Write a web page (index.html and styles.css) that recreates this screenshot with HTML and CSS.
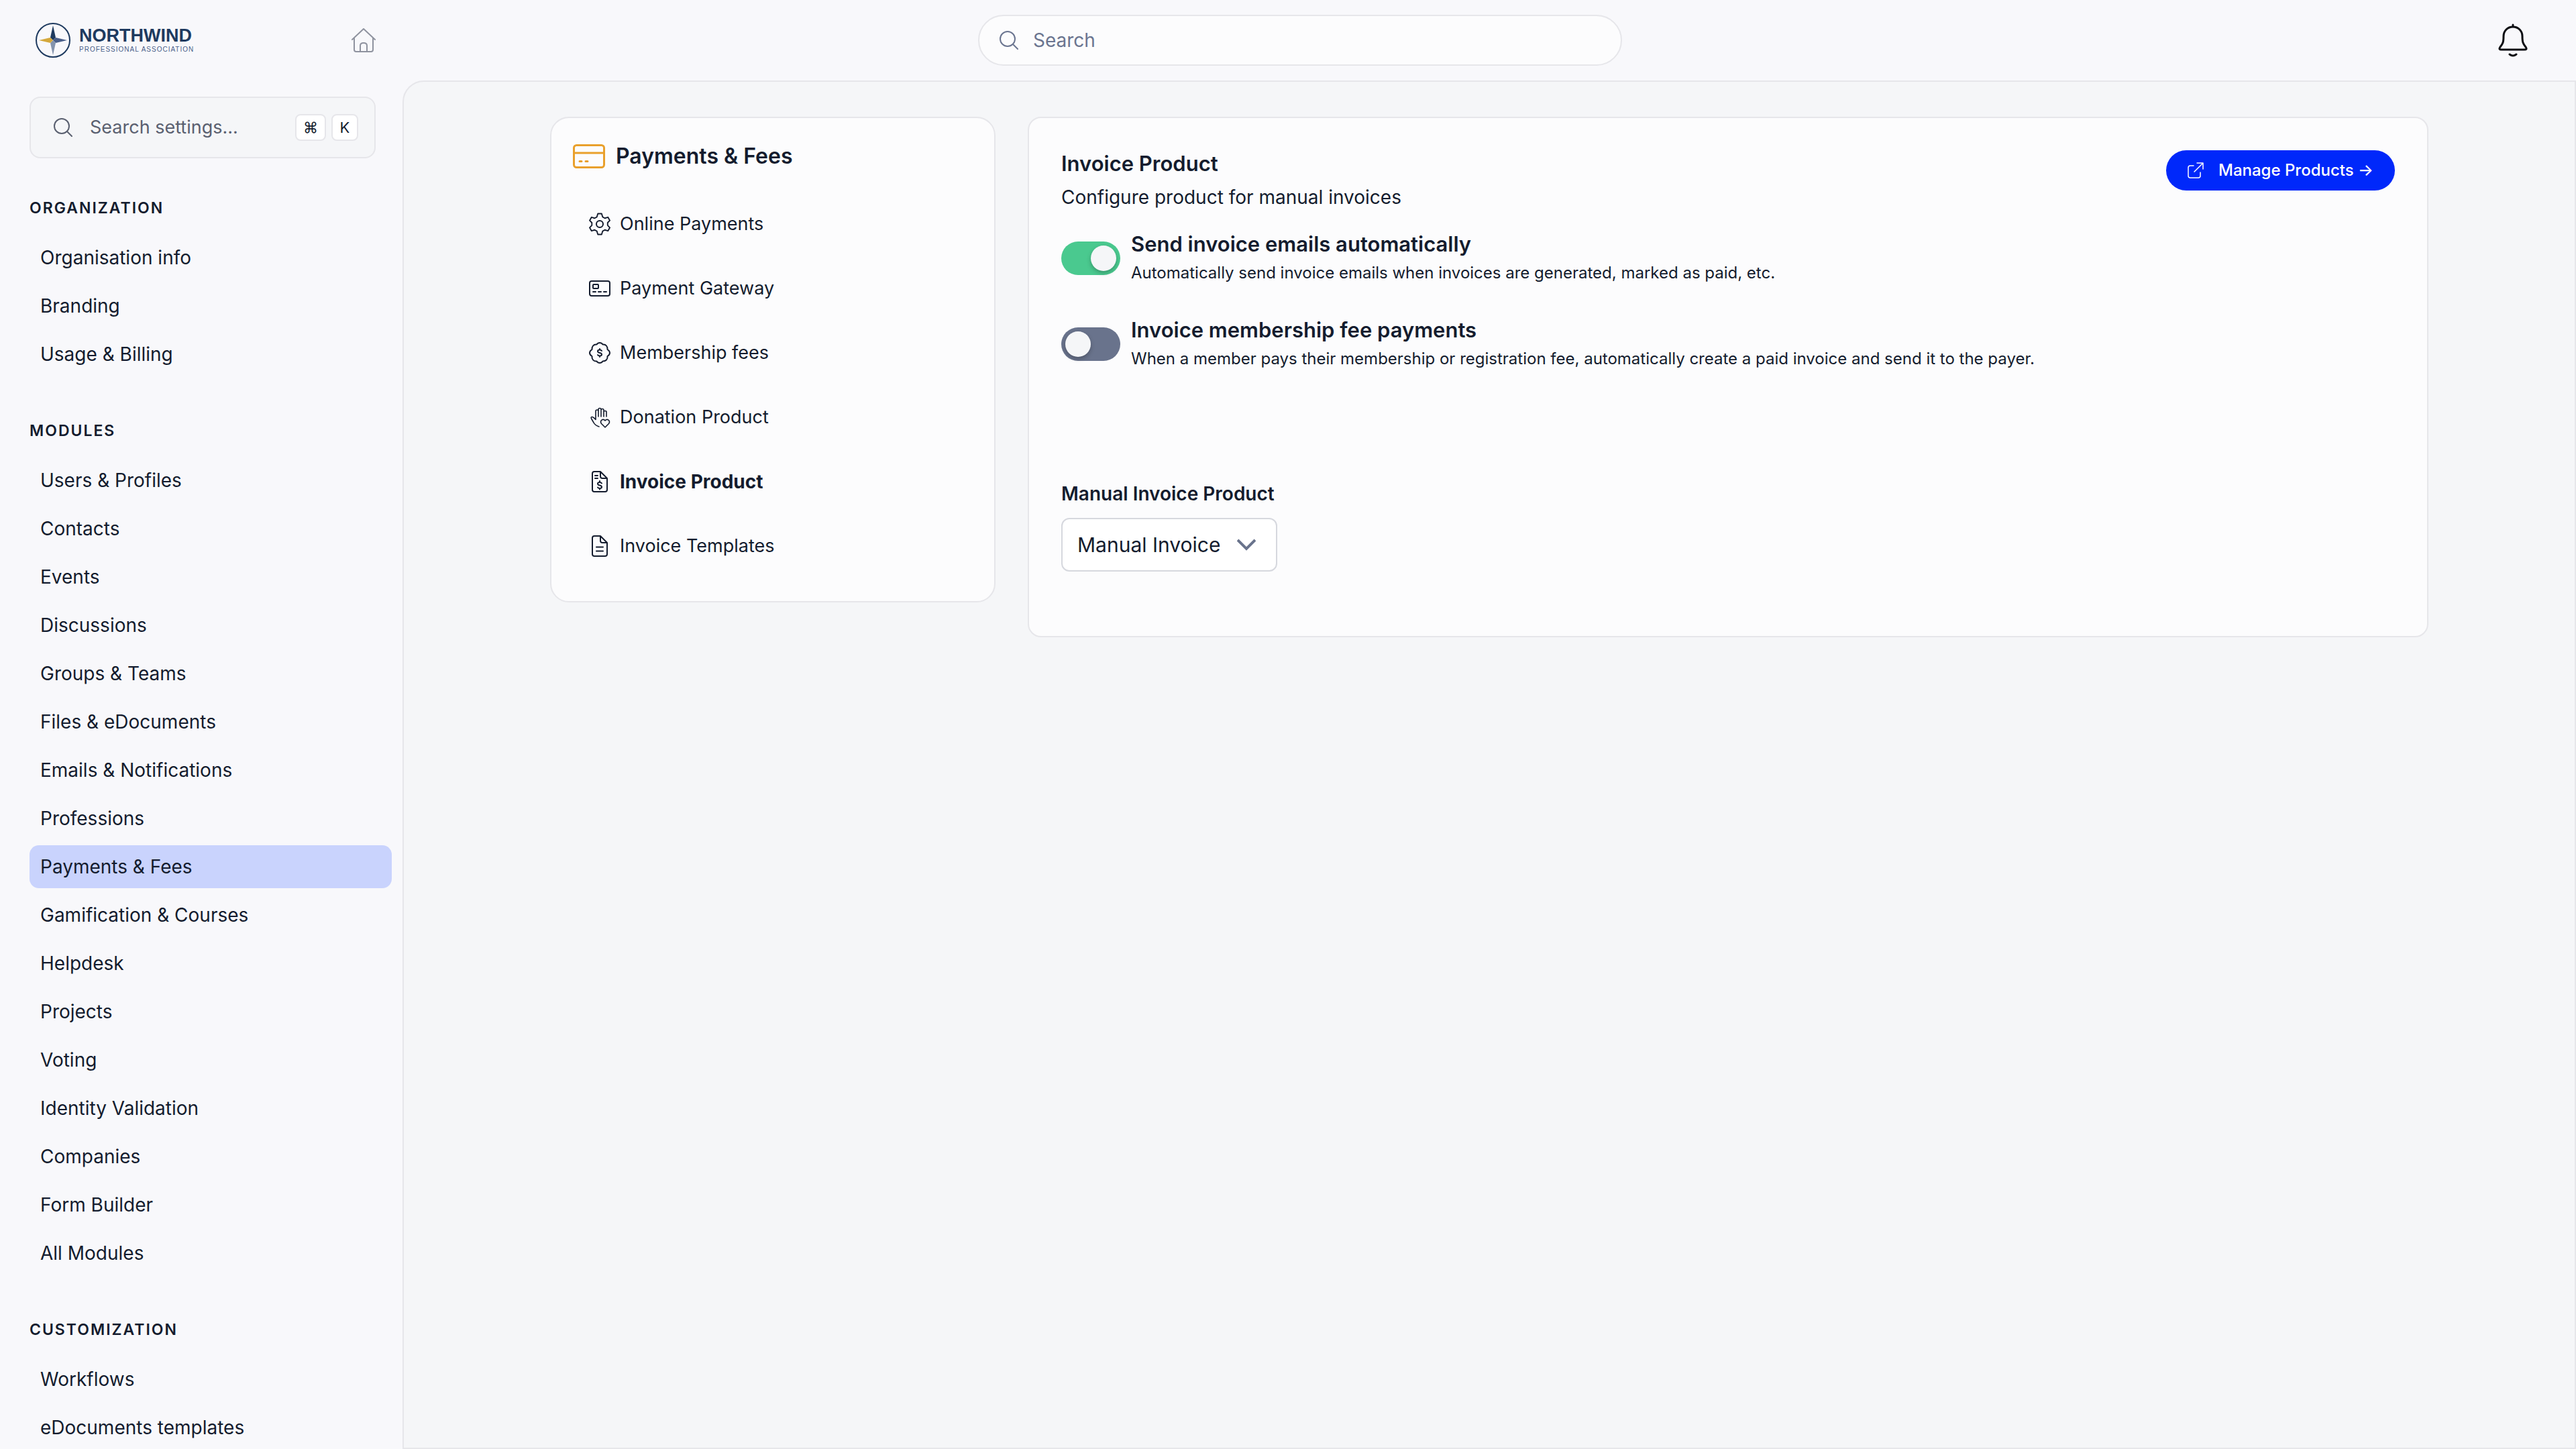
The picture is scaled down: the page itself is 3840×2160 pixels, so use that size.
FILE: index.html
```html
<!DOCTYPE html>
<html lang="en">

<head>
    <meta charset="utf-8">
    <meta name="viewport" content="width=device-width, initial-scale=1.0">
    <title>Invoice Product</title>
    <link rel="stylesheet" href="styles.css">
</head>

<body>
    <header class="topbar">
        <div class="brand">
            <a href="#" class="logo">
                <svg class="logo-mark" viewBox="0 0 54 54" fill="none">
                    <circle cx="27" cy="27" r="25" stroke="#1e3a5f" stroke-width="2" />
                    <path d="M27 5l4 18-4 4-4-4z" fill="#1e3a5f" />
                    <path d="M48 27l-17 4-4-4 4-4z" fill="#4a5f8a" />
                    <path d="M27 49l-4-18 4-4 4 4z" fill="#8494ad" />
                    <path d="M6 27l17-4 4 4-4 4z" fill="#d4a83c" />
                </svg>
                <span class="logo-text">
                    <span class="logo-name">NORTHWIND</span>
                    <span class="logo-sub">PROFESSIONAL ASSOCIATION</span>
                </span>
            </a>
            <a href="#" class="home" aria-label="Home">
                <svg viewBox="0 0 36 36" fill="none" stroke="currentColor" stroke-width="2" stroke-linecap="round" stroke-linejoin="round">
                    <path d="M1 17L18 1l17 16M4 15v17q0 3 3 3h22q3 0 3-3V15" />
                    <path d="M13 35V26q0-4 5-4t5 4v9" />
                </svg>
            </a>
        </div>
        <label class="search">
            <svg class="search-icon" viewBox="0 0 28 28" fill="none" stroke="currentColor" stroke-width="2" stroke-linecap="round">
                <circle cx="12" cy="12" r="11" />
                <path d="M20 20l7 7" />
            </svg>
            <input type="text" placeholder="Search" aria-label="Search">
        </label>
        <button class="bell" aria-label="Notifications">
            <svg viewBox="0 0 44 50" fill="none" stroke="currentColor" stroke-width="3" stroke-linecap="round" stroke-linejoin="round">
                <path d="M22 2v3M22 5c8 0 14 6 14 14 0 9 1 11 5 16 2 3 1 4-2 4H5c-3 0-4-1-2-4 4-5 5-7 5-16C8 11 14 5 22 5z" />
                <path d="M17 46q5 4 10 0" />
            </svg>
        </button>
    </header>

    <div class="layout">
        <aside class="sidebar">
            <button class="settings-search">
                <svg class="search-icon" viewBox="0 0 28 28" fill="none" stroke="currentColor" stroke-width="2" stroke-linecap="round">
                    <circle cx="12" cy="12" r="11" />
                    <path d="M20 20l7 7" />
                </svg>
                <span class="settings-label">Search settings...</span>
                <kbd>⌘</kbd>
                <kbd>K</kbd>
            </button>

            <nav class="group">
                <h2>ORGANIZATION</h2>
                <a href="#">Organisation info</a>
                <a href="#">Branding</a>
                <a href="#">Usage &amp; Billing</a>
            </nav>
            <nav class="group">
                <h2>MODULES</h2>
                <a href="#">Users &amp; Profiles</a>
                <a href="#">Contacts</a>
                <a href="#">Events</a>
                <a href="#">Discussions</a>
                <a href="#">Groups &amp; Teams</a>
                <a href="#">Files &amp; eDocuments</a>
                <a href="#">Emails &amp; Notifications</a>
                <a href="#">Professions</a>
                <a href="#" class="active">Payments &amp; Fees</a>
                <a href="#">Gamification &amp; Courses</a>
                <a href="#">Helpdesk</a>
                <a href="#">Projects</a>
                <a href="#">Voting</a>
                <a href="#">Identity Validation</a>
                <a href="#">Companies</a>
                <a href="#">Form Builder</a>
                <a href="#">All Modules</a>
            </nav>
            <nav class="group">
                <h2>CUSTOMIZATION</h2>
                <a href="#">Workflows</a>
                <a href="#">eDocuments templates</a>
            </nav>
        </aside>

        <main class="content">
            <div class="columns">
                <nav class="card submenu">
                    <h1>
                        <svg viewBox="0 0 48 36" fill="none" stroke="currentColor" stroke-width="3" stroke-linecap="round" stroke-linejoin="round">
                            <rect x="1.5" y="1.5" width="45" height="33" rx="4" />
                            <path d="M2 13h44M10 25.500h3M19 25.500h3" />
                        </svg>
                        Payments &amp; Fees
                    </h1>
                    <a href="#">
                        <svg viewBox="0 0 32 34" fill="none" stroke="currentColor" stroke-width="2" stroke-linejoin="round">
                            <path d="M13 1h6l1.500 5 3.500 2 5-1.500 3 5-3.500 3.500v4l3.500 3.500-3 5-5-1.500-3.500 2L19 33h-6l-1.500-5L8 26l-5 1.500-3-5L3.500 19v-4L0 11.500l3-5L8 8l3.500-2z" transform="translate(1 .5) scale(.94 .97)" />
                            <circle cx="16" cy="17" r="5" />
                        </svg>
                        Online Payments
                    </a>
                    <a href="#">
                        <svg viewBox="0 0 32 34" fill="none" stroke="currentColor" stroke-width="2" stroke-linecap="round" stroke-linejoin="round">
                            <rect x="1" y="6" width="30" height="22" rx="3" />
                            <rect x="6" y="11" width="8" height="6" rx="1" />
                            <path d="M6 22h4M14 22h4M22 22h4" />
                        </svg>
                        Payment Gateway
                    </a>
                    <a href="#">
                        <svg viewBox="0 0 32 34" fill="none" stroke="currentColor" stroke-width="2" stroke-linecap="round" stroke-linejoin="round">
                            <path d="M16 2q3 0 4.500 2.500Q24 4 26 6.500T27.500 12Q31 14 31 17t-3.500 5q.5 3.500-1.500 5.500t-5.500 2Q19 32 16 32t-4.500-2.500q-3.500.5-5.500-2T4.500 22Q1 20 1 17t3.500-5Q4 9 6 6.500t5.500-2Q13 2 16 2z" />
                            <path d="M19 14q-1-1.500-3-1.500-3 0-3 2t3 2.500q3 .5 3 2.500t-3 2q-2 0-3-1.500M16 11v1.500M16 21.500V23" />
                        </svg>
                        Membership fees
                    </a>
                    <a href="#">
                        <svg viewBox="0 0 32 34" fill="none" stroke="currentColor" stroke-width="1.6" stroke-linecap="round" stroke-linejoin="round">
                            <path d="M15 31Q9 29 7 25L3.500 19q-1-3 1.500-2.500 2 .5 5 4V8q0-2 2-2t2 2v8M14 8V5.500q0-2 2-2t2 2V16M18 6q0-1.500 2-1.500T22 6.500V16M22 9q0-1.500 2-1.500T26 9v7" />
                            <path d="M24 32l-5.500-5.500q-2-2.500 0-5 3-2.500 5.500.5 2.500-3 5.500-.5 2 2.500 0 5z" />
                        </svg>
                        Donation Product
                    </a>
                    <a href="#" class="current">
                        <svg viewBox="0 0 32 34" fill="none" stroke="currentColor" stroke-width="2" stroke-linecap="round" stroke-linejoin="round">
                            <path d="M8 2h9l10 10v17q0 3-3 3H8q-3 0-3-3V5q0-3 3-3zM17 2v7q0 3 3 3h7M9 8h4M9 12h4" />
                            <path d="M19 19.500q-1-1.500-3-1.500-3 0-3 2t3 2.500q3 .5 3 2.500t-3 2q-2 0-3-1.500M16 16v2M16 27v1.500" />
                        </svg>
                        Invoice Product
                    </a>
                    <a href="#">
                        <svg viewBox="0 0 32 34" fill="none" stroke="currentColor" stroke-width="2" stroke-linecap="round" stroke-linejoin="round">
                            <path d="M8 2h9l10 10v17q0 3-3 3H8q-3 0-3-3V5q0-3 3-3zM17 2v7q0 3 3 3h7M11 18.500h10M11 24.500h10" />
                        </svg>
                        Invoice Templates
                    </a>
                </nav>

                <section class="card panel">
                    <div class="panel-head">
                        <div>
                            <h2>Invoice Product</h2>
                            <p>Configure product for manual invoices</p>
                        </div>
                        <button class="manage">
                            <svg viewBox="0 0 24 24" fill="none" stroke="currentColor" stroke-width="1.5" stroke-linecap="round" stroke-linejoin="round">
                                <path d="M9 5H4Q1 5 1 8v12q0 3 3 3h12q3 0 3-3v-5M14 1h9v9M23 1L10 14" />
                            </svg>
                            Manage Products →
                        </button>
                    </div>

                    <div class="option">
                        <input type="checkbox" id="auto-send" checked>
                        <label for="auto-send">
                            <strong>Send invoice emails automatically</strong>
                            <span>Automatically send invoice emails when invoices are generated, marked as paid, etc.</span>
                        </label>
                    </div>
                    <div class="option">
                        <input type="checkbox" id="fee-invoice">
                        <label for="fee-invoice">
                            <strong>Invoice membership fee payments</strong>
                            <span>When a member pays their membership or registration fee, automatically create a paid invoice and send it to the payer.</span>
                        </label>
                    </div>

                    <div class="field">
                        <label for="product">Manual Invoice Product</label>
                        <div class="select">
                            <select id="product">
                                <option>Manual Invoice</option>
                            </select>
                            <svg viewBox="0 0 28 18" fill="none" stroke="currentColor" stroke-width="4">
                                <path d="M1 2l13 13L27 2" />
                            </svg>
                        </div>
                    </div>
                </section>
            </div>
        </main>
    </div>
</body>

</html>
```
FILE: styles.css
```css
*,
body * {
    box-sizing: border-box;
}

body {
    margin: 0;
    height: 100vh;
    display: flex;
    flex-direction: column;
    overflow: hidden;
    background-color: #f8f8fb;
    color: #141c2e;
    font-family: Inter, sans-serif;
    font-size: 28px;
    line-height: 40px;
}

h1,
h2,
p {
    margin: 0;
}

a {
    color: inherit;
    text-decoration: none;
}

button,
input,
select {
    font: inherit;
    color: inherit;
}

svg {
    display: block;
    flex: none;
}

/* top bar */

.topbar {
    display: grid;
    grid-template-columns: 1fr 960px 1fr;
    align-items: center;
    height: 120px;
    padding: 0 8px 0 44px;
    flex: none;
}

.brand {
    display: flex;
    align-items: center;
    justify-content: space-between;
    width: 516px;
    padding-left: 8px;
}

.logo {
    display: flex;
    align-items: center;
    gap: 12px;
    color: #1e3a5f;
}

.logo-mark {
    width: 54px;
    height: 54px;
}

.logo-text {
    display: flex;
    flex-direction: column;
}

.logo-name {
    font-family: "Liberation Sans", sans-serif;
    font-size: 27px;
    font-weight: 700;
    line-height: 28px;
}

.logo-sub {
    font-family: "Liberation Sans", sans-serif;
    font-size: 10px;
    line-height: 14px;
    letter-spacing: 1px;
    color: #4a5f8a;
}

.home {
    color: #8f939f;
}

.home svg {
    width: 36px;
    height: 36px;
}

.search {
    display: flex;
    align-items: center;
    gap: 22px;
    height: 76px;
    padding: 0 30px;
    border: 2px solid #e6e6ea;
    border-radius: 38px;
    background-color: #fcfcfd;
    color: #6b7590;
}

.search-icon {
    width: 28px;
    height: 28px;
}

.search input {
    flex: 1;
    padding: 0;
    border: 0;
    outline: 0;
    background: none;
}

.search input::placeholder {
    color: #6b7590;
    opacity: 1;
}

.bell {
    justify-self: end;
    padding: 0;
    margin-right: 64px;
    border: 0;
    background: none;
    color: #0c0d12;
}

.bell svg {
    width: 44px;
    height: 50px;
}

/* sidebar */

.layout {
    display: flex;
    flex: 1;
    min-height: 0;
}

.sidebar {
    width: 600px;
    flex: none;
    padding: 24px 16px 0 44px;
    overflow: hidden;
}

.settings-search {
    display: flex;
    align-items: center;
    gap: 8px;
    width: 516px;
    height: 92px;
    padding: 0 24px 0 34px;
    margin-bottom: 58px;
    border: 2px solid #e6e6ea;
    border-radius: 16px;
    background-color: #f5f6f8;
    color: #5a6070;
    text-align: left;
}

.settings-label {
    flex: 1;
    padding-left: 18px;
    font-size: 27px;
}

kbd {
    min-width: 40px;
    padding: 0 10px;
    border: 2px solid #e6e6ea;
    border-radius: 8px;
    background-color: #fff;
    color: #141c2e;
    font-family: Inter, sans-serif;
    font-size: 22px;
    line-height: 36px;
    text-align: center;
}

.group {
    display: flex;
    flex-direction: column;
    gap: 8px;
    margin-bottom: 66px;
}

.group h2 {
    margin-bottom: 18px;
    font-size: 23px;
    font-weight: 600;
    line-height: 32px;
    letter-spacing: 2px;
}

.group a {
    padding: 12px 16px;
    border-radius: 14px;
}

.group .active {
    background-color: #c9d3fd;
}

/* content */

.content {
    flex: 1;
    padding: 52px 40px;
    border: 2px solid #e6e6ea;
    border-top-left-radius: 32px;
    background-color: #f5f6f8;
}

.columns {
    display: flex;
    align-items: flex-start;
    gap: 48px;
    max-width: 2800px;
    margin: 0 auto;
}

.card {
    border: 2px solid #e6e6ea;
    background-color: #fcfcfd;
}

.submenu {
    display: flex;
    flex-direction: column;
    gap: 32px;
    width: 664px;
    flex: none;
    padding: 32px 32px 50px;
    border-radius: 28px;
}

.submenu h1 {
    display: flex;
    align-items: center;
    gap: 16px;
    margin-bottom: 12px;
    font-size: 32px;
    font-weight: 600;
    line-height: 50px;
}

.submenu h1 svg {
    width: 48px;
    height: 36px;
    color: #e9a02c;
}

.submenu a {
    display: flex;
    align-items: center;
    gap: 14px;
    padding: 12px 24px;
    font-size: 27px;
}

.submenu a svg {
    width: 32px;
    height: 34px;
}

.submenu .current {
    font-size: 28px;
    font-weight: 700;
}

.panel {
    flex: 1;
    padding: 48px 48px 96px;
    border-radius: 20px;
}

.panel-head {
    display: flex;
    align-items: flex-start;
    justify-content: space-between;
    margin-bottom: 28px;
}

.panel h2 {
    font-size: 31px;
    font-weight: 600;
    line-height: 40px;
}

.panel-head p {
    padding-top: 10px;
}

.manage {
    display: flex;
    align-items: center;
    gap: 22px;
    height: 60px;
    padding: 0 32px;
    border: 0;
    border-radius: 30px;
    background-color: #0028fa;
    color: #fff;
    font-size: 24px;
    font-weight: 500;
}

.manage svg {
    width: 24px;
    height: 24px;
}

.option {
    display: flex;
    align-items: center;
    gap: 16px;
    margin-bottom: 42px;
}

.option input {
    appearance: none;
    flex: none;
    width: 88px;
    height: 50px;
    padding: 6px;
    margin: 0;
    border-radius: 25px;
    background-color: #69738c;
}

.option input::before {
    content: "";
    display: block;
    width: 38px;
    height: 38px;
    border-radius: 50%;
    background-color: #f5f6f8;
    box-shadow: 0 3px 6px rgba(0, 0, 0, .25);
}

.option input:checked {
    background-color: #4ac98f;
}

.option input:checked::before {
    margin-left: auto;
}

.option strong {
    display: block;
    font-size: 31px;
    font-weight: 600;
    line-height: 44px;
}

.option span {
    display: block;
    font-size: 24px;
    line-height: 42px;
}

.field {
    padding-top: 118px;
}

.field label {
    display: block;
    margin-bottom: 16px;
    font-weight: 600;
}

.select {
    display: inline-grid;
    align-items: center;
    color: #69738c;
}

.select select,
.select svg {
    grid-area: 1 / 1;
}

.select select {
    appearance: none;
    height: 80px;
    padding: 0 82px 0 22px;
    border: 2px solid #d6d8de;
    border-radius: 12px;
    background-color: #fff;
    color: #141c2e;
    font-size: 30px;
}

.select svg {
    justify-self: end;
    width: 28px;
    height: 18px;
    margin-right: 32px;
    pointer-events: none;
}
```
